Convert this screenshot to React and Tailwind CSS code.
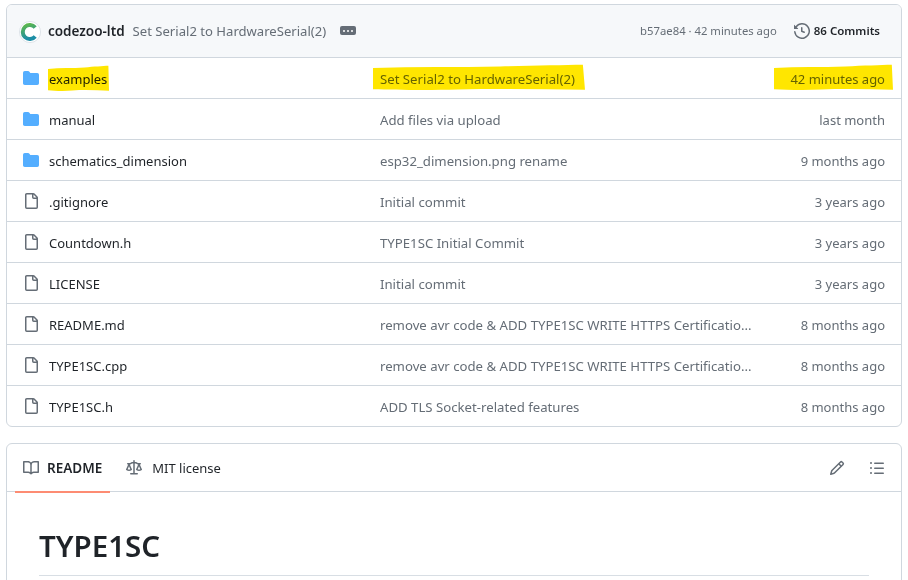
const FONT = "font-['Noto_Sans','Open_Sans',sans-serif]";

const DIR = "M1.75 1A1.75 1.75 0 0 0 0 2.75v10.5C0 14.216.784 15 1.75 15h12.5A1.75 1.75 0 0 0 16 13.25v-8.5A1.75 1.75 0 0 0 14.25 3H7.5a.25.25 0 0 1-.2-.1l-.9-1.2C6.07 1.26 5.55 1 5 1H1.75Z";
const FILE = "M2 1.75C2 .784 2.784 0 3.75 0h6.586c.464 0 .909.184 1.237.513l2.914 2.914c.329.328.513.773.513 1.237v9.586A1.75 1.75 0 0 1 13.25 16h-9.5A1.75 1.75 0 0 1 2 14.25Zm1.75-.25a.25.25 0 0 0-.25.25v12.5c0 .138.112.25.25.25h9.5a.25.25 0 0 0 .25-.25V6h-2.75A1.75 1.75 0 0 1 9 4.25V1.5Zm6.75.062V4.25c0 .138.112.25.25.25h2.688l-.011-.013-2.914-2.914-.013-.011Z";
const HISTORY = "m.427 1.927 1.215 1.215a8.002 8.002 0 1 1-1.6 5.685.75.75 0 1 1 1.493-.154 6.5 6.5 0 1 0 1.18-4.458l1.358 1.358A.25.25 0 0 1 3.896 6H.25A.25.25 0 0 1 0 5.75V2.104a.25.25 0 0 1 .427-.177ZM7.75 4a.75.75 0 0 1 .75.75v2.992l2.028.812a.75.75 0 0 1-.557 1.392l-2.5-1A.751.751 0 0 1 7 8.25v-3.5A.75.75 0 0 1 7.75 4Z";
const BOOK = "M0 1.75A.75.75 0 0 1 .75 1h4.253c1.227 0 2.317.59 3 1.501A3.743 3.743 0 0 1 11.006 1h4.245a.75.75 0 0 1 .75.75v10.5a.75.75 0 0 1-.75.75h-4.507a2.25 2.25 0 0 0-1.591.659l-.622.621a.75.75 0 0 1-1.06 0l-.622-.621A2.25 2.25 0 0 0 5.258 13H.75a.75.75 0 0 1-.75-.75Zm7.251 10.324.004-5.073-.002-2.253A2.25 2.25 0 0 0 5.003 2.5H1.5v9h3.757a3.75 3.75 0 0 1 1.994.574ZM8.755 4.75l-.004 7.322a3.752 3.752 0 0 1 1.992-.572H14.5v-9h-3.495a2.25 2.25 0 0 0-2.25 2.25Z";
const LAW = "M8.75.75V2h.985c.304 0 .603.08.867.231l1.29.736c.038.022.08.033.124.033h2.234a.75.75 0 0 1 0 1.5h-.427l2.111 4.692a.75.75 0 0 1-.154.838l-.53-.53.529.531-.001.002-.002.002-.006.006-.006.005-.01.01-.045.04c-.21.176-.441.327-.686.45C14.556 10.78 13.88 11 13 11a4.498 4.498 0 0 1-2.023-.454 3.544 3.544 0 0 1-.686-.45l-.045-.04-.016-.015-.006-.006-.004-.004v-.001a.75.75 0 0 1-.154-.838L12.178 4.5h-.162c-.305 0-.604-.079-.868-.231l-1.29-.736a.245.245 0 0 0-.124-.033H8.75V13h2.5a.75.75 0 0 1 0 1.5h-6.5a.75.75 0 0 1 0-1.5h2.5V3.5h-.984a.245.245 0 0 0-.124.033l-1.289.737c-.265.15-.564.23-.869.23h-.162l2.112 4.692a.75.75 0 0 1-.154.838l-.53-.53.529.531-.001.002-.002.002-.006.006-.016.015-.045.04c-.21.176-.441.327-.686.45C4.556 10.78 3.88 11 3 11a4.498 4.498 0 0 1-2.023-.454 3.544 3.544 0 0 1-.686-.45l-.045-.04-.016-.015-.006-.006-.004-.004v-.001a.75.75 0 0 1-.154-.838L2.178 4.5H1.75a.75.75 0 0 1 0-1.5h2.234a.249.249 0 0 0 .125-.033l1.288-.737c.265-.15.564-.23.869-.23h.984V.75a.75.75 0 0 1 1.5 0Zm2.945 8.477c.285.135.718.273 1.305.273s1.02-.138 1.305-.273L13 6.327Zm-10 0c.285.135.718.273 1.305.273s1.02-.138 1.305-.273L3 6.327Z";
const PENCIL = "M11.013 1.427a1.75 1.75 0 0 1 2.474 0l1.086 1.086a1.75 1.75 0 0 1 0 2.474l-8.61 8.61c-.21.21-.47.364-.756.445l-3.251.93a.75.75 0 0 1-.927-.928l.929-3.25c.081-.286.235-.547.445-.758l8.61-8.61Zm.176 4.823L9.75 4.81l-6.286 6.287a.253.253 0 0 0-.064.108l-.558 1.953 1.953-.558a.253.253 0 0 0 .108-.064Zm1.238-3.763a.25.25 0 0 0-.354 0L10.811 3.75l1.439 1.44 1.263-1.263a.25.25 0 0 0 0-.354Z";
const LIST = "M5.75 2.5h8.5a.75.75 0 0 1 0 1.5h-8.5a.75.75 0 0 1 0-1.5Zm0 5h8.5a.75.75 0 0 1 0 1.5h-8.5a.75.75 0 0 1 0-1.5Zm0 5h8.5a.75.75 0 0 1 0 1.5h-8.5a.75.75 0 0 1 0-1.5ZM2 14a1 1 0 1 1 0-2 1 1 0 0 1 0 2Zm1-6a1 1 0 1 1-2 0 1 1 0 0 1 2 0ZM2 4a1 1 0 1 1 0-2 1 1 0 0 1 0 2Z";

const rows = [
  { name: "examples", dir: true, msg: "Set Serial2 to HardwareSerial(2)", time: "42 minutes ago", mark: true },
  { name: "manual", dir: true, msg: "Add files via upload", time: "last month" },
  { name: "schematics_dimension", dir: true, msg: "esp32_dimension.png rename", time: "9 months ago" },
  { name: ".gitignore", msg: "Initial commit", time: "3 years ago" },
  { name: "Countdown.h", msg: "TYPE1SC Initial Commit", time: "3 years ago" },
  { name: "LICENSE", msg: "Initial commit", time: "3 years ago" },
  { name: "README.md", msg: "remove avr code & ADD TYPE1SC WRITE HTTPS Certificatio...", time: "8 months ago" },
  { name: "TYPE1SC.cpp", msg: "remove avr code & ADD TYPE1SC WRITE HTTPS Certificatio...", time: "8 months ago" },
  { name: "TYPE1SC.h", msg: "ADD TLS Socket-related features", time: "8 months ago" },
];

function Icon({ d, className }) {
  return (
    <svg viewBox="0 0 16 16" fill="currentColor" className={className}>
      <path d={d} />
    </svg>
  );
}

// hand-drawn marker stroke laid over the text
function Marker({ className }) {
  return (
    <svg viewBox="0 0 100 100" preserveAspectRatio="none" className={`absolute mix-blend-multiply ${className}`}>
      <path
        d="M0 14 C20 10 40 12 60 9 C75 6 90 4 99 3 L100 92 C80 90 60 88 40 91 C25 94 10 92 0 90 Z"
        fill="#ffe600"
      />
    </svg>
  );
}

function Avatar() {
  return (
    <svg viewBox="0 0 22 22" className="w-[22px] h-[22px] shrink-0">
      <defs>
        <linearGradient id="cz" x1="0" y1="0" x2="0.3" y2="1">
          <stop offset="0" stopColor="#5fb84a" />
          <stop offset="1" stopColor="#1d8ea6" />
        </linearGradient>
      </defs>
      <circle cx="11" cy="11" r="10.6" fill="#fff" stroke="#d8dee4" strokeWidth="0.8" />
      <path d="M16.2 6.6A7 7 0 1 0 16.2 15.4" fill="none" stroke="url(#cz)" strokeWidth="4" />
    </svg>
  );
}

function Row({ row }) {
  return (
    <div className="flex items-center h-[41px] border-t border-[#d0d7de] text-[13px] leading-5 pt-[2px]">
      <Icon d={row.dir ? DIR : FILE} className={`w-4 h-4 ml-4 -mt-[2px] shrink-0 ${row.dir ? "text-[#54aeff]" : "text-[#656d76]"}`} />
      <div className="w-[341px] pl-[10px] shrink-0 text-[#1f2328]">
        <div className="relative w-fit">
          {row.name}
          {row.mark && <Marker className="-left-[1px] -top-[4px] w-[61px] h-[28px]" />}
        </div>
      </div>
      <div className="w-[377px] shrink-0 text-[13.2px] text-[#656d76]">
        <div className="relative w-fit whitespace-nowrap">
          {row.msg}
          {row.mark && <Marker className="-left-[7px] -top-[5px] w-[212px] h-[28px]" />}
        </div>
      </div>
      <div className="flex-1 pr-4 text-[#656d76] whitespace-nowrap">
        <div className="relative w-fit ml-auto">
          {row.time}
          {row.mark && <Marker className="-left-[16px] -top-[5px] w-[119px] h-[28px]" />}
        </div>
      </div>
    </div>
  );
}

export default function App() {
  return (
    <div className={`${FONT} w-[908px] h-[580px] overflow-hidden bg-white pt-1 px-[6px]`}>
      <div className="w-[896px] border border-[#d0d7de] rounded-md overflow-hidden">
        <div className="flex items-center h-[52px] bg-[#f6f8fa] pl-3 pr-[21px] pt-[1px] text-[13.1px] text-[#656d76]">
          <Avatar />
          <span className="ml-[7px] text-[13.5px] font-semibold text-[#1f2328]">codezoo-ltd</span>
          <span className="ml-2">Set Serial2 to HardwareSerial(2)</span>
          <span className="ml-[14px] -mt-[2px] flex items-center justify-center gap-[2px] w-4 h-[9px] bg-[#656d76] rounded-[2px]">
            <span className="w-[2px] h-[2px] bg-white rounded-full" />
            <span className="w-[2px] h-[2px] bg-white rounded-full" />
            <span className="w-[2px] h-[2px] bg-white rounded-full" />
          </span>
          <span className="ml-auto text-[11.3px]">b57ae84 · 42 minutes ago</span>
          <Icon d={HISTORY} className="w-4 h-4 ml-[17px] -mt-[1px] text-[#656d76]" />
          <span className="ml-1 -mt-[1px] text-[11.5px] font-semibold text-[#1f2328]">86 Commits</span>
        </div>
        {rows.map((row) => (
          <Row key={row.name} row={row} />
        ))}
      </div>

      <div className="w-[896px] mt-4 h-[200px] border border-[#d0d7de] rounded-md">
        <div className="flex items-center h-[48px] border-b border-[#d0d7de] text-[13px]">
          <div className="relative flex items-center h-[48px] ml-2 px-2 pt-[1px] text-[13.5px] font-semibold text-[#1f2328]">
            <Icon d={BOOK} className="w-4 h-4 text-[#656d76] mr-2" />
            README
            <span className="absolute left-0 right-0 -bottom-[1px] h-[2px] bg-[#fd8c73]" />
          </div>
          <div className="flex items-center ml-4 pt-[2px] text-[#1f2328]">
            <Icon d={LAW} className="w-4 h-4 -mt-[1px] text-[#656d76] mr-[10px]" />
            MIT license
          </div>
          <Icon d={PENCIL} className="w-4 h-4 ml-auto text-[#656d76]" />
          <Icon d={LIST} className="w-4 h-4 ml-6 mr-4 text-[#656d76]" />
        </div>
        <div className="px-8 pt-[30px]">
          <h1 className="text-[29.5px] leading-[48px] font-semibold text-[#1f2328] pb-[5px] border-b border-[#d8dee4]">TYPE1SC</h1>
        </div>
      </div>
    </div>
  );
}
